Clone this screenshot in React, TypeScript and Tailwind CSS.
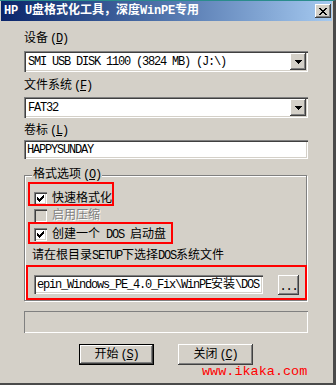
import React from "react";

// classic Win2000 bevels
const sunken =
  "shadow-[inset_1px_1px_0_#808080,inset_2px_2px_0_#404040,inset_-1px_-1px_0_#ffffff,inset_-2px_-2px_0_#d4d0c8]";
const raised =
  "shadow-[inset_-1px_-1px_0_#404040,inset_1px_1px_0_#ffffff,inset_-2px_-2px_0_#808080]";

function T({ s, bold }: { s: string; bold?: boolean }) {
  const parts = s.match(/[\x00-\x7f]+|[^\x00-\x7f]+/g) ?? [];
  return (
    <>
      {parts.map((p, i) =>
        /^[\x00-\x7f]/.test(p) ? (
          <span key={i} className={bold ? "whitespace-pre tracking-[-0.2px]" : "whitespace-pre tracking-[-1.2px]"}>
            {p}
          </span>
        ) : (
          <span key={i}>{p}</span>
        )
      )}
    </>
  );
}

function Acc({ label, k }: { label: string; k: string }) {
  return (
    <span>
      {label}
      <span className="ml-[2px] tracking-[-1.2px]">
        (<u>{k}</u>)
      </span>
    </span>
  );
}

function Arrow() {
  return (
    <svg width="7" height="4" viewBox="0 0 7 4" shapeRendering="crispEdges">
      <rect x="0" y="0" width="7" height="1" fill="#000" />
      <rect x="1" y="1" width="5" height="1" fill="#000" />
      <rect x="2" y="2" width="3" height="1" fill="#000" />
      <rect x="3" y="3" width="1" height="1" fill="#000" />
    </svg>
  );
}

function Combo({ value }: { value: string }) {
  return (
    <div className={`flex h-[21px] w-[284px] items-center bg-white pl-[4px] pr-[2px] ${sunken}`}>
      <span className="flex-1 whitespace-pre tracking-[-1.2px]">{value}</span>
      <div className={`flex h-[17px] w-[16px] items-center justify-center bg-[#d4d0c8] ${raised}`}>
        <Arrow />
      </div>
    </div>
  );
}

function Check({ checked, disabled }: { checked?: boolean; disabled?: boolean }) {
  return (
    <div
      className={`flex h-[13px] w-[13px] shrink-0 items-start justify-start p-[3px] ${sunken} ${
        disabled ? "bg-[#d4d0c8]" : "bg-white"
      }`}
    >
      {checked && (
        <svg width="7" height="7" viewBox="0 0 7 7" shapeRendering="crispEdges">
          <rect x="0" y="2" width="1" height="3" fill="#000" />
          <rect x="1" y="3" width="1" height="3" fill="#000" />
          <rect x="2" y="4" width="1" height="3" fill="#000" />
          <rect x="3" y="3" width="1" height="3" fill="#000" />
          <rect x="4" y="2" width="1" height="3" fill="#000" />
          <rect x="5" y="1" width="1" height="3" fill="#000" />
          <rect x="6" y="0" width="1" height="3" fill="#000" />
        </svg>
      )}
    </div>
  );
}

function CloseGlyph() {
  const rows = ["11000011", "01100110", "00111100", "00011000", "00111100", "01100110", "11000011"];
  return (
    <svg width="8" height="7" viewBox="0 0 8 7" shapeRendering="crispEdges">
      {rows.map((r, y) =>
        r.split("").map((c, x) => (c === "1" ? <rect key={`${x}-${y}`} x={x} y={y} width="1" height="1" fill="#000" /> : null))
      )}
    </svg>
  );
}

export default function App() {
  return (
    <div className="relative h-[385px] w-[336px] overflow-hidden border-t border-r-[3px] border-b-[2px] border-t-[#2a8c8c] border-r-[#4a4a4a] border-b-[#4a4a4a] bg-[#d4d0c8] font-['Liberation_Mono','Noto_Sans_CJK_SC',monospace] text-[12px] leading-[14px] text-black">
      {/* title bar */}
      <div className="ml-[1px] flex h-[20px] w-[331px] items-center justify-between bg-gradient-to-r from-[#0a246a] to-[#a6caf0] pl-[3px] pr-[1px]">
        <span className="font-bold text-white">
          <T s="HP U盘格式化工具，深度WinPE专用" bold />
        </span>
        <div className={`flex h-[14px] w-[16px] items-center justify-center bg-[#d4d0c8] ${raised}`}>
          <CloseGlyph />
        </div>
      </div>

      <div className="flex flex-col pl-[24px]">
        <div className="mt-[11px]">
          <Acc label="设备" k="D" />
        </div>
        <div className="mt-[5px]">
          <Combo value="SMI USB DISK 1100 (3824 MB) (J:\)" />
        </div>

        <div className="mt-[7px]">
          <Acc label="文件系统" k="F" />
        </div>
        <div className="mt-[4px]">
          <Combo value="FAT32" />
        </div>

        <div className="mt-[6px]">
          <Acc label="卷标" k="L" />
        </div>
        <div className={`mt-[2px] flex h-[19px] w-[284px] items-center bg-white pl-[3px] ${sunken}`}>
          <span className="tracking-[-1.2px]">HAPPYSUNDAY</span>
        </div>

        {/* 格式选项 */}
        <div className="relative mt-[16px] h-[126px] w-[283px] border border-[#808080] shadow-[inset_1px_1px_0_#ffffff,1px_1px_0_#ffffff]">
          <div className="absolute left-[7px] top-[-8px] bg-[#d4d0c8] px-[1px]">
            <Acc label="格式选项" k="O" />
          </div>
          <div className="flex flex-col pl-[9px] pt-[16px]">
            <div className="flex h-[13px] items-center gap-[5px]">
              <Check checked />
              <span>快速格式化</span>
            </div>
            <div className="mt-[4px] flex h-[13px] items-center gap-[5px]">
              <Check disabled />
              <span className="text-[#808080] [text-shadow:1px_1px_0_#ffffff]">启用压缩</span>
            </div>
            <div className="mt-[6px] flex h-[13px] items-center gap-[5px]">
              <Check checked />
              <span>
                <T s="创建一个 DOS 启动盘" />
              </span>
            </div>
            <div className="ml-[-2px] mt-[8px]">
              <T s="请在根目录SETUP下选择DOS系统文件" />
            </div>
            <div className="mt-[12px] flex items-start gap-[15px]">
              <div className={`flex h-[19px] w-[229px] items-center overflow-hidden bg-white pl-[3px] ${sunken}`}>
                <span className="whitespace-nowrap">
                  <T s="epin_Windows_PE_4.0_Fix\WinPE安装\DOS" />
                </span>
              </div>
              <div className={`flex h-[20px] w-[21px] items-end justify-center bg-[#d4d0c8] pb-[3px] ${raised}`}>
                <span className="tracking-[-1.2px] leading-[10px]">...</span>
              </div>
            </div>
          </div>
        </div>

        {/* progress */}
        <div className="mt-[10px] h-[22px] w-[284px] shadow-[inset_1px_1px_0_#808080,inset_-1px_-1px_0_#ffffff]" />

        {/* buttons */}
        <div className="mt-[11px] flex w-[284px] justify-center gap-[24px]">
          <div className="h-[21px] w-[75px] border border-black">
            <div className={`flex h-full w-full items-center justify-center ${raised}`}>
              <Acc label="开始" k="S" />
            </div>
          </div>
          <div className={`flex h-[21px] w-[75px] items-center justify-center ${raised} shadow-[inset_-1px_-1px_0_#404040,inset_1px_1px_0_#ffffff,inset_-2px_-2px_0_#808080]`}>
            <Acc label="关闭" k="C" />
          </div>
        </div>
      </div>

      {/* annotation overlays */}
      <div className="pointer-events-none absolute left-[28px] top-[181px] h-[24px] w-[86px] border-2 border-[#ff0000]" />
      <div className="pointer-events-none absolute left-[28px] top-[221px] h-[22px] w-[145px] border-2 border-[#ff0000]" />
      <div className="pointer-events-none absolute left-[26px] top-[264px] h-[35px] w-[281px] border-2 border-[#ff0000]" />
      <div className="absolute left-[202px] top-[363px] text-[13.5px] leading-[16px] text-[#ff0000]">www.ikaka.com</div>
    </div>
  );
}
